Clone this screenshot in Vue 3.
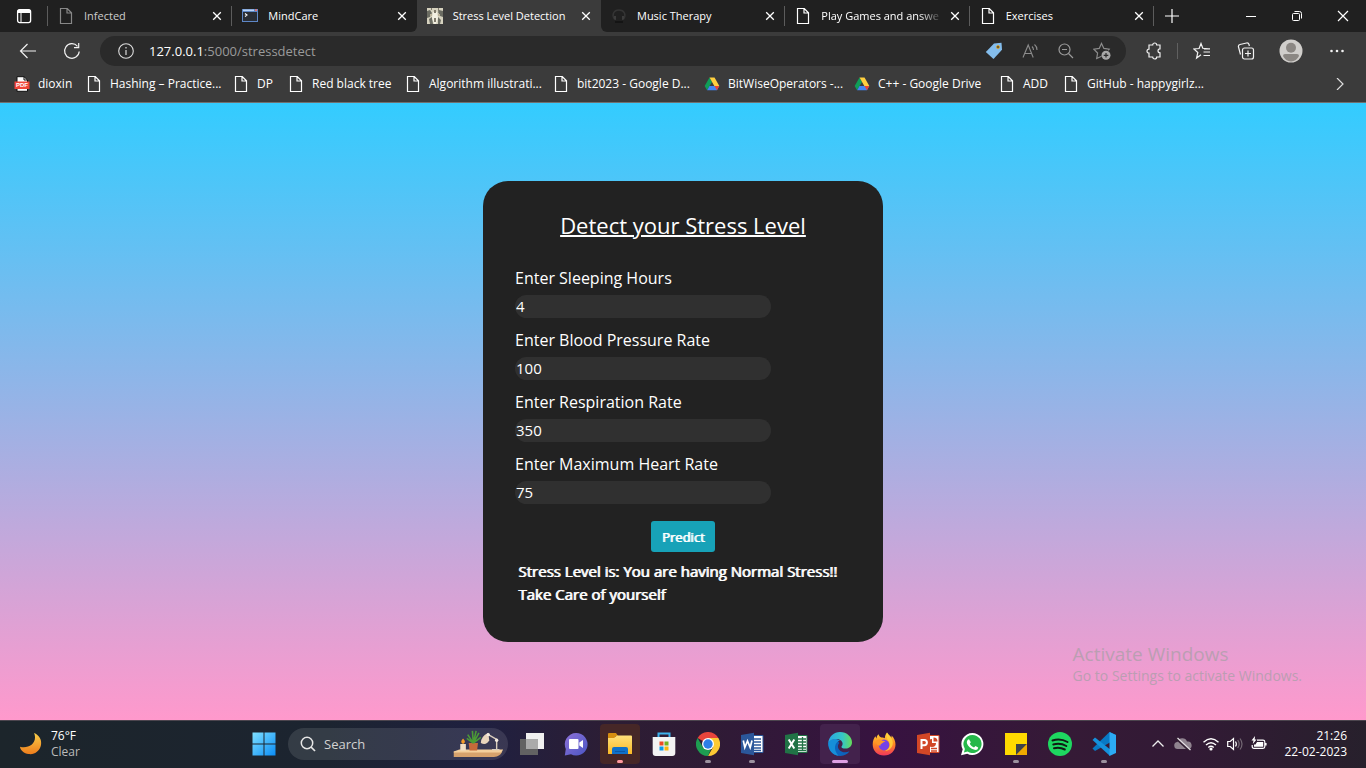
<script setup>
import { ref } from 'vue'

const tabs = [
  { title: 'Infected', icon: 'page', dim: true },
  { title: 'MindCare', icon: 'terminal' },
  { title: 'Stress Level Detection', icon: 'photo', active: true },
  { title: 'Music Therapy', icon: 'headphones' },
  { title: 'Play Games and answe', icon: 'page', fade: true },
  { title: 'Exercises', icon: 'page' }
]

const bookmarks = [
  { title: 'dioxin', icon: 'pdf' },
  { title: 'Hashing – Practice...', icon: 'page' },
  { title: 'DP', icon: 'page' },
  { title: 'Red black tree', icon: 'page' },
  { title: 'Algorithm illustrati...', icon: 'page' },
  { title: 'bit2023 - Google D...', icon: 'page' },
  { title: 'BitWiseOperators -...', icon: 'drive' },
  { title: 'C++ - Google Drive', icon: 'drive' },
  { title: 'ADD', icon: 'page' },
  { title: 'GitHub - happygirlz...', icon: 'page' }
]

const fields = ref([
  { id: 'sleep', label: 'Enter Sleeping Hours', value: '4' },
  { id: 'pressure', label: 'Enter Blood Pressure Rate', value: '100' },
  { id: 'respiration', label: 'Enter Respiration Rate', value: '350' },
  { id: 'heart', label: 'Enter Maximum Heart Rate', value: '75' }
])

const apps = [
  { id: 'taskview', name: 'Task view' },
  { id: 'chat', name: 'Chat' },
  { id: 'explorer', name: 'File Explorer', state: 'attention' },
  { id: 'store', name: 'Microsoft Store' },
  { id: 'chrome', name: 'Chrome', state: 'running' },
  { id: 'word', name: 'Word', state: 'running' },
  { id: 'excel', name: 'Excel' },
  { id: 'edge', name: 'Edge', state: 'current' },
  { id: 'firefox', name: 'Firefox' },
  { id: 'powerpoint', name: 'PowerPoint' },
  { id: 'whatsapp', name: 'WhatsApp' },
  { id: 'notes', name: 'Sticky Notes', state: 'running' },
  { id: 'spotify', name: 'Spotify' },
  { id: 'vscode', name: 'Visual Studio Code', state: 'running' }
]
</script>

<template>
  <div class="desktop">
    <svg class="sprite" width="0" height="0" aria-hidden="true">
      <defs>
        <linearGradient id="g-moon" x1="0" y1="0" x2="0" y2="1"><stop offset="0" stop-color="#f9cf4a" /><stop offset="1" stop-color="#ee7d1c" /></linearGradient>
        <linearGradient id="g-win" x1="0" y1="0" x2="1" y2="1"><stop offset="0" stop-color="#7fe0ff" /><stop offset="1" stop-color="#0a8cf5" /></linearGradient>
        <linearGradient id="g-chat" x1="0" y1="0" x2="1" y2="1"><stop offset="0" stop-color="#8e72d8" /><stop offset="1" stop-color="#4a55c4" /></linearGradient>
        <linearGradient id="g-folder" x1="0" y1="0" x2="0" y2="1"><stop offset="0" stop-color="#ffe07a" /><stop offset="1" stop-color="#fbb925" /></linearGradient>
        <linearGradient id="g-edge" x1="0" y1="0" x2="1" y2="0"><stop offset="0" stop-color="#2aa6e4" /><stop offset="0.6" stop-color="#36c6c6" /><stop offset="1" stop-color="#65dc58" /></linearGradient>
        <linearGradient id="g-fox" x1="0" y1="0" x2="0" y2="1"><stop offset="0" stop-color="#ffd83a" /><stop offset="0.5" stop-color="#ff8a22" /><stop offset="1" stop-color="#f0365c" /></linearGradient>
      </defs>
      <symbol id="i-page" viewBox="0 0 16 16">
        <path d="M2.500.5h6.700L13.500 4.800v10.700h-11zM9 .5V5h4.500" fill="none" stroke="currentColor" stroke-width="1.200" />
      </symbol>
      <symbol id="i-terminal" viewBox="0 0 16 16">
        <path fill="#5e87c6" d="M0 1h16v13H0z" /><path fill="#b9d3f5" d="M1 1.500h11v1.500H1z" /><path fill="#e07272" d="M13 1.300h2v1.700h-2z" /><path fill="#292d34" d="M1 4h14v9H1z" /><path d="M3 5.500l2 1.500-2 1.500" fill="none" stroke="#fff" stroke-width="1.100" />
      </symbol>
      <symbol id="i-photo" viewBox="0 0 16 16">
        <path fill="#d6d2bf" d="M0 0h16v16H0z" /><path fill="#6b6c62" d="M0 3l3-1 2 3-2 4-3 1zM12 2l4 1v6l-3-1-2-4zM2 11l3-2 1 7H3zM11 9l3 3-1 4h-2z" /><path fill="#f3f0e2" d="M6 4h4l1 6-2 6H7L5 10z" /><path fill="#807a6c" d="M7 2h2v3H7zM7 10h2v4H7zM4 0h1v2H4zM11 0h1v3h-1z" /><path fill="#bcb39b" d="M3 6h2v2H3zM11 6h2v2h-2z" />
      </symbol>
      <symbol id="i-headphones" viewBox="0 0 16 16">
        <path d="M3.500 11C.5 7 2.500 2 8 2s7.500 5 4.500 9" fill="none" stroke="#343434" stroke-width="1.500" /><path d="M3 8v3.500l2 .5V8zM13 8v3.500l-2 .5V8z" fill="#3c3c3c" /><path d="M4 14h8" stroke="#141414" stroke-width="2" />
      </symbol>
      <symbol id="i-drive" viewBox="0 0 16 16">
        <path fill="#0f9d58" d="M5.500 1.500L.7 10l2.400 4.300L8 5.900z" /><path fill="#ffcf3f" d="M5.500 1.500h5L15.300 10h-5z" /><path fill="#4285f4" d="M3.100 14.300L5.500 10h9.800l-2.400 4.300z" /><path fill="#ea4335" d="M10.500 10h4.800l-2.400 4.300z" />
      </symbol>
      <symbol id="i-close" viewBox="0 0 16 16"><path d="M4.200 4.200l7.600 7.600M11.800 4.200l-7.600 7.600" stroke="currentColor" stroke-width="1.300" /></symbol>

      <symbol id="a-taskview" viewBox="0 0 24 24">
        <path fill="#f0f0f0" d="M6 1h18v16H6z" /><path fill="#626262" d="M0 7h18v16H0z" /><path fill="#aaa" d="M6 7h12v10H6z" />
      </symbol>
      <symbol id="a-chat" viewBox="0 0 24 24">
        <path fill="url(#g-chat)" d="M12 1a11.300 11.300 0 1 1-5 21.300L.8 23.500 1.800 17A11.300 11.300 0 0 1 12 1z" /><rect x="5" y="7" width="9.500" height="10" rx="1" fill="#fff" /><path fill="#fff" d="M15.300 10.500L19 8v8l-3.700-2.500z" />
      </symbol>
      <symbol id="a-explorer" viewBox="0 0 24 24">
        <path fill="#d68e10" d="M0 2q0-1 1-1h7l2 3h-2L6 7H0z" /><path fill="url(#g-folder)" d="M0 6h6l3-2.500h14q1 0 1 1V22H0z" /><path fill="#0f71c9" d="M4 22v-5q0-2 2-2h12q2 0 2 2v5z" /><path fill="#0b58a5" d="M7 19h10v1H7z" />
      </symbol>
      <symbol id="a-store" viewBox="0 0 24 24">
        <path d="M6.500 6V1.500h11V6" fill="none" stroke="#3db2ed" stroke-width="2" /><path fill="#f3f3f3" d="M.7 5h22.600v16q0 3-3 3H3.700q-3 0-3-3z" /><path fill="#ed4b25" d="M7.500 9.500h4v4h-4z" /><path fill="#75b320" d="M12.500 9.500h4v4h-4z" /><path fill="#0b9be8" d="M7.500 14.500h4v4h-4z" /><path fill="#fbb60c" d="M12.500 14.500h4v4h-4z" />
      </symbol>
      <symbol id="a-chrome" viewBox="0 0 24 24">
        <path fill="#e8453c" d="M12 12L1.600 6A12 12 0 0 1 22.400 6z" /><path fill="#fcc934" d="M12 12V6h10.400A12 12 0 0 1 12 24l5.200-9z" /><path fill="#1e9c51" d="M1.600 6l5.200 9 5.200 3 3-1L12 24A12 12 0 0 1 1.600 6z" /><circle cx="12" cy="12" r="6" fill="#fff" /><circle cx="12" cy="12" r="4.700" fill="#2d7ee8" />
      </symbol>
      <symbol id="a-word" viewBox="0 0 24 24">
        <path fill="#fff" stroke="#2b579a" d="M11 3.500h12v17H11z" /><path d="M13 7h8M13 10h8M13 13h8M13 16h8M13 18.500h8" stroke="#2b579a" stroke-width="1.300" /><path fill="#2b579a" d="M1 3L14 .8v22.400L1 21z" /><path d="M3.300 8.500l1.500 7L7.500 9l2.700 6.500 1.800-7" fill="none" stroke="#fff" stroke-width="1.700" />
      </symbol>
      <symbol id="a-excel" viewBox="0 0 24 24">
        <path fill="#fff" stroke="#217346" d="M11 3.500h12v17H11z" /><path d="M14 7h8M14 10h8M14 13h8M14 16h8M14 18.500h8M18.500 5v14" stroke="#217346" stroke-width="1.300" /><path fill="#217346" d="M1 3L14 .8v22.400L1 21z" /><path d="M4.700 7.500l5.600 9M10.300 7.500l-5.600 9" fill="none" stroke="#fff" stroke-width="2" />
      </symbol>
      <symbol id="a-powerpoint" viewBox="0 0 24 24">
        <path fill="#fff" stroke="#d24726" d="M11 3.500h12v17H11z" /><path d="M15 16.500h6M15 19h6" stroke="#d24726" stroke-width="1.300" /><path fill="#d24726" d="M16 7a4 4 0 1 0 4 4h-4z" /><path fill="#d24726" d="M17.500 5.500a4 4 0 0 1 4 4h-4z" /><path fill="#d24726" d="M1 3L14 .8v22.400L1 21z" /><path d="M5.500 17V8h2.800a2.600 2.600 0 0 1 0 5.200H5.500" fill="none" stroke="#fff" stroke-width="2" />
      </symbol>
      <symbol id="a-edge" viewBox="0 0 24 24">
        <path fill="#0c64bd" d="M.2 10.500C.5 18 5 24 12.500 24c4 0 7-2 9-4.700-4 2-8.500 1-10.500-1.800-1.500-2-1.500-4.500.3-6.500C9 7 3 6 .2 10.500z" /><path fill="#168fd8" d="M.2 11C1.500 7 8 5.500 12 8.500 7 10 4.500 17 10.500 23.800 4.500 23 0 18 .2 11z" /><path fill="url(#g-edge)" d="M.2 10.800C1 4.500 6 0 12 0c7 0 12 5 12 10.300 0 4-3 6.300-6.500 6.300-3 0-4.500-1.200-4-2.100 2.500-2.600.8-7.200-4.700-7.500C4.500 6.800 1.500 8.300.2 10.800z" />
      </symbol>
      <symbol id="a-firefox" viewBox="0 0 24 24">
        <path fill="url(#g-fox)" d="M15 .5c1 1.800 3.200 3.300 4.500 5.200.2-.8.100-1.500 0-2.200C22 5.500 23.500 9 23.500 12.500c0 6.500-5 11-11.500 11S.7 19 .7 12.500C.7 9 1.800 6 3.500 4.300c.2 1 .5 1.700 1 2.200 0-1.800 1-3.500 2-4.300.4 1.600 1.300 2.800 3 3.200 1.400 0 2.800.1 3.300.8C13 4 13.700 2 15 .5z" /><circle cx="12" cy="13" r="5.400" fill="#7542e5" /><path fill="#ff9828" d="M4 9c2-2 5-2 6.500-.3 1.200-.2 2.200 0 3 .8-1.700.1-2.300 1-3.300 1.800-.9.600-1.900.8-1.600 2.200C4.500 14 4 11 4 9z" /><path fill="#ffd43c" d="M15 .5c1 3 5.500 5 5.800 10 .2 5-3.500 8.300-7.800 8.300 3-1 5-3.500 4.700-6.800-.3-3.500-4.700-5-2.700-11.500z" opacity=".85" />
      </symbol>
      <symbol id="a-whatsapp" viewBox="0 0 24 24">
        <path fill="#fff" d="M12.500 1a11 11 0 1 1-5.300 20.700L1 23.300l1.700-6A11 11 0 0 1 12.500 1z" /><path fill="#25b84a" d="M12.500 3a9 9 0 1 1-4.900 16.500l-3.700 1 1-3.600A9 9 0 0 1 12.500 3z" /><path fill="#fff" d="M9 7.200l1.800 3-1 1.500c1 1.900 2.200 3 4.200 3.700l1.500-1.500 2.700 1.500c-.2 2-1.800 2.800-3.600 2.400C10.500 17 8 14 7 11.500c-.6-1.900.4-4 2-4.300z" />
      </symbol>
      <symbol id="a-notes" viewBox="0 0 24 24">
        <path fill="#ffd900" d="M1 1h22v11L12 23H1z" /><path fill="#3d4148" d="M12 12h11L12 23z" /><path fill="#f0a900" d="M23 12v11H12z" />
      </symbol>
      <symbol id="a-spotify" viewBox="0 0 24 24">
        <circle cx="12" cy="12" r="12" fill="#1ed760" /><path d="M4.500 8.500c5-1.500 10.500-1 15 1.500M5.300 12.500c4.300-1.200 9-.8 13 1.500M6 16.200c4-.9 7.500-.5 10.800 1.300" fill="none" stroke="#101a14" stroke-width="2" stroke-linecap="round" />
      </symbol>
      <symbol id="a-vscode" viewBox="0 0 24 24">
        <path fill="#0879c5" d="M17.500 0L24 3v4L3 19l-2.500-2.500z" /><path fill="#1591dc" d="M.5 8L3 5.500 18 17.300V24z" /><path fill="#2cabf4" d="M17.500 0L24 3v18l-6.500 3z" />
      </symbol>
    </svg>

    <header class="browser">
      <div class="tabstrip">
        <button class="tab-menu" aria-label="Tab actions">
          <svg width="16" height="16" viewBox="0 0 16 16"><rect x="1.600" y="1.600" width="13" height="13" rx="2" fill="none" stroke="#fff" stroke-width="1.300" /><path fill="#fff" d="M1.500 3q0-1.500 1.500-1.500h10q1.500 0 1.500 1.500v2h-13z" /><path d="M5 5v9.500" stroke="#fff" /></svg>
        </button>
        <nav class="tabs" aria-label="Tabs">
          <div v-for="tab in tabs" :key="tab.title" class="tab" :class="{ active: tab.active, dim: tab.dim, fade: tab.fade }">
            <svg width="16" height="16"><use :href="'#i-' + tab.icon" /></svg>
            <a href="#" class="tab-title">{{ tab.title }}</a>
            <button class="tab-close" :aria-label="'Close ' + tab.title"><svg width="16" height="16"><use href="#i-close" /></svg></button>
          </div>
        </nav>
        <button class="new-tab" aria-label="New tab"><svg width="16" height="16" viewBox="0 0 16 16"><path d="M8 1v14M1 8h14" stroke="#fff" stroke-width="1.200" /></svg></button>
        <div class="window-buttons">
          <button aria-label="Minimize"><svg width="12" height="12" viewBox="0 0 12 12"><path d="M1 6.500h10" stroke="#fff" /></svg></button>
          <button aria-label="Restore"><svg width="12" height="12" viewBox="0 0 12 12"><rect x="1.500" y="3.500" width="7" height="7" rx="1" fill="none" stroke="#fff" /><path d="M3.500 1.500H8.500q2 0 2 2v5" fill="none" stroke="#fff" /></svg></button>
          <button aria-label="Close"><svg width="12" height="12" viewBox="0 0 12 12"><path d="M1 1l10 10M11 1L1 11" stroke="#fff" stroke-width="1.200" /></svg></button>
        </div>
      </div>

      <div class="toolbar">
        <button class="tool" aria-label="Back"><svg width="18" height="18" viewBox="0 0 18 18"><path d="M17 9H1.500M8.500 2l-7 7 7 7" fill="none" stroke="#f2f2f2" stroke-width="1.200" /></svg></button>
        <button class="tool" aria-label="Refresh"><svg width="18" height="18" viewBox="0 0 18 18"><path d="M16.200 9.500A7.300 7.300 0 1 1 14.500 4.300M15.700 1v4.700H11" fill="none" stroke="#f2f2f2" stroke-width="1.200" /></svg></button>
        <div class="address">
          <svg width="16" height="16" viewBox="0 0 16 16"><circle cx="8" cy="8" r="7.300" fill="none" stroke="#ddd" stroke-width="1.100" /><path d="M8 7v5M8 4v1.500" stroke="#ddd" stroke-width="1.200" /></svg>
          <a href="#" class="url"><span class="host">127.0.0.1</span>:5000/stressdetect</a>
          <button aria-label="Shopping"><svg width="18" height="18" viewBox="0 0 18 18"><path fill="#84bdec" d="M9 1.500L16.500.8l.5 7L8.500 17 .8 10z" /><circle cx="13" cy="5" r="1.500" fill="#4a4028" stroke="#d3a43a" /></svg></button>
          <button aria-label="Read aloud"><svg width="18" height="18" viewBox="0 0 18 18"><path d="M2 15.500L7.200 3l5 12.500M4 11.500h6.500M11 4.500q1.500 1.500 1.500 3.500M13.500 2.500q2.500 2 2.500 5.500" fill="none" stroke="#8c8c8c" stroke-width="1.100" /></svg></button>
          <button aria-label="Zoom"><svg width="18" height="18" viewBox="0 0 18 18"><circle cx="7.500" cy="7.500" r="5.500" fill="none" stroke="#9a9a9a" stroke-width="1.200" /><path d="M5 7.500h5M11.500 11.500l4.500 4.500" stroke="#9a9a9a" stroke-width="1.200" /></svg></button>
          <button aria-label="Add to favorites"><svg width="18" height="18" viewBox="0 0 18 18"><path d="M8.500 14.200l-4.800 2.300.9-5.500L.9 7.200l5.300-.8L8.500 1.500l2.400 4.900 5.300.8-1 1.200" fill="none" stroke="#8c8c8c" stroke-width="1.200" /><circle cx="13" cy="13.300" r="4.500" fill="#a8a8a8" /><path d="M13 11v4.600M10.700 13.300h4.600" stroke="#2b2b2b" stroke-width="1.200" /></svg></button>
        </div>
        <button class="tool" aria-label="Extensions"><svg width="18" height="18" viewBox="0 0 18 18"><path d="M5.500 3h2.200a2 2 0 0 1 4 0h3.300v3.800a2 2 0 0 0 0 4V15h-3.300a2 2 0 0 1-4 0H4v-3.800a2 2 0 1 1 0-4V3z" fill="none" stroke="#f2f2f2" stroke-width="1.200" /></svg></button>
        <span class="divider"></span>
        <button class="tool" aria-label="Favorites"><svg width="18" height="18" viewBox="0 0 18 18"><path d="M8 12.800L3.600 16l1.200-5.500L.9 7l5.200-.5L8 1.500l1.800 4.800 5.700.5M10.500 10H17M10.500 13.500H17M11 6.800h6" fill="none" stroke="#f2f2f2" stroke-width="1.200" /></svg></button>
        <button class="tool" aria-label="Collections"><svg width="18" height="18" viewBox="0 0 18 18"><rect x="5.500" y="6" width="11" height="11" rx="2" fill="none" stroke="#f2f2f2" stroke-width="1.200" /><path d="M11 8.500v6M8 11.500h6M3.500 12.500L1.500 5q-.5-2 1.500-2.500L9.500 1q2-.4 2.500 1.500l.4 1.500" fill="none" stroke="#f2f2f2" stroke-width="1.200" /></svg></button>
        <button class="tool wide" aria-label="Profile"><svg width="24" height="24" viewBox="0 0 24 24"><circle cx="12" cy="12" r="11.500" fill="#d0cecb" /><circle cx="12" cy="8.800" r="5" fill="#8b8783" /><path fill="#8b8783" d="M4 17q0-2 2-2h12q2 0 2 2-2.500 5-8 5.500Q6.500 22 4 17z" /></svg></button>
        <button class="tool wide" aria-label="Settings and more"><svg width="18" height="18" viewBox="0 0 18 18" fill="#f2f2f2"><circle cx="3.500" cy="9" r="1.300" /><circle cx="9" cy="9" r="1.300" /><circle cx="14.500" cy="9" r="1.300" /></svg></button>
      </div>

      <nav class="bookmarks" aria-label="Favorites bar">
        <a v-for="mark in bookmarks" :key="mark.title" href="#">
          <svg v-if="mark.icon === 'pdf'" width="16" height="16" viewBox="0 0 16 16">
            <path d="M3 .7h7L13.500 4v11.300H3z" fill="#fff" stroke="#111" /><path d="M10 .7V4h3.500" fill="none" stroke="#111" /><path fill="#f04438" d="M.5 5.500h15v7.500H.5z" /><text class="pdf-label" x="8" y="11">PDF</text>
          </svg>
          <svg v-else width="16" height="16"><use :href="'#i-' + mark.icon" /></svg>{{ mark.title }}
        </a>
        <button aria-label="More favorites"><svg width="12" height="12" viewBox="0 0 12 12"><path d="M3 0l6 6-6 6" fill="none" stroke="#ddd" stroke-width="1.200" /></svg></button>
      </nav>
    </header>

    <main class="page">
      <form class="card" @submit.prevent>
        <h1>Detect your Stress Level</h1>
        <div v-for="field in fields" :key="field.id" class="field">
          <label :for="field.id">{{ field.label }}</label>
          <input :id="field.id" v-model="field.value" type="text" inputmode="numeric">
        </div>
        <button class="predict" type="submit">Predict</button>
        <p class="result">Stress Level is: You are having Normal Stress!! Take Care of yourself</p>
      </form>
      <div class="watermark">
        <p class="wm-title">Activate Windows</p>
        <p class="wm-text">Go to Settings to activate Windows.</p>
      </div>
    </main>

    <footer class="taskbar">
      <a href="#" class="weather">
        <svg width="24" height="24" viewBox="0 0 24 24"><path fill="url(#g-moon)" d="M15 1c5 2 8 6.500 7 12-1.200 6-6.500 10-12.500 9C5 21.300 1.500 18.500 1 14.700c7 2 15-1.700 15-9.200 0-1.700-.4-3.300-1-4.500z" /></svg>
        <span><b>76°F</b>Clear</span>
      </a>
      <div class="dock">
        <button class="app" aria-label="Start"><svg width="24" height="24" viewBox="0 0 24 24"><path fill="url(#g-win)" d="M.5.5h11v11H.5zM12.500.5h11v11h-11zM.5 12.500h11v11H.5zM12.500 12.500h11v11h-11z" /></svg></button>
        <label class="search">
          <svg width="16" height="16" viewBox="0 0 16 16"><circle cx="7" cy="7" r="5.700" fill="none" stroke="#e6e6e6" stroke-width="1.500" /><path d="M11 11l4 4" stroke="#e6e6e6" stroke-width="1.700" /></svg>
          <input type="search" placeholder="Search" aria-label="Search">
          <svg width="52" height="28" viewBox="0 0 54 30">
            <path fill="#d6a26c" d="M1 23h52q-2 5-9 6H1z" /><path fill="#f3cf9c" d="M1 23l6-2h47l-2 3H1z" />
            <path fill="#f1dfc4" d="M8 15h6v7H8z" /><path fill="#f49b28" d="M11 9q4 4 0 6-4-2 0-6z" />
            <path fill="#c66a3a" d="M17 14h10l-1 8h-8z" />
            <path d="M22 14L21 1M22 14L16 5M22 14L28 3M22 14l-7-5M22 14l8-6M22 14L25 1" stroke="#4b9b35" stroke-width="1.700" />
            <path d="M38 5l9 5v11M42 21h8" fill="none" stroke="#d9cdbd" stroke-width="1.500" /><path fill="#e9d5bd" d="M38 3l1 8q-3 6-9 3 0-7 8-11z" /><circle cx="38" cy="5" r="1.800" fill="#f4eadf" /><circle cx="47" cy="11" r="1.800" fill="#f4eadf" />
          </svg>
        </label>
        <button v-for="app in apps" :key="app.id" class="app" :class="app.state" :aria-label="app.name">
          <svg width="24" height="24"><use :href="'#a-' + app.id" /></svg>
        </button>
      </div>
      <div class="tray">
        <svg width="16" height="16" viewBox="0 0 16 16"><path d="M2.500 10.500L8 5l5.500 5.500" fill="none" stroke="#eee" stroke-width="1.300" /></svg>
        <svg class="cloud" width="18" height="16" viewBox="0 0 18 16"><path fill="#8f838f" d="M4 13a3.500 3.500 0 0 1-.5-7A5 5 0 0 1 13 5.500 3.800 3.800 0 0 1 14.500 13z" /><path d="M2 2l13 12" stroke="#332033" stroke-width="2.500" /><path d="M3.500 2l13 12" stroke="#e5e0e5" stroke-width="1.300" /></svg>
        <svg width="16" height="16" viewBox="0 0 16 16"><path d="M.5 6.200q7.500-6.800 15 0M3 9q5-4.600 10 0M5.300 11.500q2.700-2.400 5.400 0" fill="none" stroke="#fff" stroke-width="1.400" /><circle cx="8" cy="13" r="1.600" fill="#fff" /></svg>
        <svg width="16" height="16" viewBox="0 0 16 16"><path d="M.7 5.500h2.500l3.300-3v11l-3.300-3H.7z" fill="none" stroke="#fff" stroke-width="1.200" /><path d="M8.500 5.500q1.700 2.500 0 5" fill="none" stroke="#fff" stroke-width="1.200" /><path d="M10.700 4q3 4 0 8M13 2.500q4 5.500 0 11" fill="none" stroke="#746874" stroke-width="1.200" /></svg>
        <svg width="16" height="16" viewBox="0 0 16 16"><path d="M6 4.200h6q1.800 0 1.800 1.800v4.500q0 1.800-1.800 1.800H3q-1.800 0-1.800-1.800V9M15 7v2.500" fill="none" stroke="#fff" stroke-width="1.200" /><path fill="#fff" d="M6 6h6.200v4.700H3V8.500h1.500zM4 0L.5 4.500h2L1.800 8 5.500 3.500H3.700z" /></svg>
        <time class="clock" datetime="2023-02-22T21:26"><span>21:26</span><span>22-02-2023</span></time>
      </div>
    </footer>
  </div>
</template>

<style>
body {
  margin: 0;
}
</style>

<style scoped>
.desktop {
  display: flex;
  flex-direction: column;
  min-height: 100vh;
  font-family: "Open Sans", "Noto Sans", sans-serif;
  font-size: 12px;
  color: #fff;
}
.desktop * {
  box-sizing: border-box;
}
.sprite {
  position: absolute;
}
button {
  display: flex;
  align-items: center;
  justify-content: center;
  padding: 0;
  border: 0;
  background: none;
  color: inherit;
  font: inherit;
}
a {
  color: inherit;
  text-decoration: none;
}
svg {
  flex: none;
}
h1,
p {
  margin: 0;
}

.browser {
  background: #3b3b3b;
  border-bottom: 1px solid #707070;
}
.tabstrip {
  display: flex;
  height: 32px;
  background: #202020;
}
.tab-menu {
  width: 48px;
}
.tabs {
  display: flex;
  flex: 0 1 1106px;
  min-width: 0;
  background: #3b3b3b;
}
.tab {
  position: relative;
  display: flex;
  flex: 1 1 0;
  min-width: 0;
  align-items: center;
  gap: 10px;
  padding: 0 7px 0 10px;
  background: #202020;
}
.tab:not(.active)::after {
  content: "";
  position: absolute;
  right: 0;
  top: 6px;
  width: 1px;
  height: 20px;
  background: #5c5c5c;
}
.tab:nth-child(1)::before {
  content: "";
  position: absolute;
  left: -1px;
  top: 6px;
  width: 1px;
  height: 20px;
  background: #5c5c5c;
}
.tab:nth-child(2) {
  border-bottom-right-radius: 6px;
}
.tab:nth-child(2)::after {
  display: none;
}
.tab:nth-child(4) {
  border-bottom-left-radius: 6px;
}
.tab.active {
  background: #3b3b3b;
}
.dim > svg {
  color: #888;
}
.dim .tab-title {
  color: #ccc;
}
.tab-title {
  flex: 1;
  padding-bottom: 2px;
  font-size: 11px;
  white-space: nowrap;
}
.fade .tab-title {
  mask-image: linear-gradient(to right, #000 calc(100% - 24px), transparent);
}
.tab-close {
  width: 16px;
  margin-left: -6px;
}
.new-tab {
  width: 36px;
}
.window-buttons {
  display: flex;
  margin-left: auto;
}
.window-buttons button {
  width: 46px;
}

.toolbar {
  display: flex;
  align-items: center;
  height: 38px;
  padding: 0 6px;
}
.tool {
  width: 44px;
  height: 30px;
}
.wide {
  width: 46px;
}
.address {
  display: flex;
  flex: 1;
  align-items: center;
  height: 30px;
  margin: 0 6px;
  padding: 0 6px 0 18px;
  border-radius: 15px;
  background: #2a2a2a;
}
.address button {
  width: 36px;
  height: 30px;
}
.url {
  flex: 1;
  padding-left: 15px;
  font-size: 13px;
  color: #9a9a9a;
}
.host {
  color: #fff;
}
.divider {
  width: 1px;
  height: 16px;
  margin: 0 2px 0 1px;
  background: #606060;
}

.bookmarks {
  display: grid;
  grid-template-columns: 72px 147px 55px 117px 148px 151px 150px 145px 64px 1fr 24px;
  align-items: center;
  height: 32px;
  padding: 0 14px 5px;
}
.bookmarks a {
  display: flex;
  align-items: center;
  gap: 8px;
  white-space: nowrap;
}
.pdf-label {
  fill: #fff;
  font-family: "Liberation Sans", sans-serif;
  font-size: 6px;
  font-weight: 700;
  text-anchor: middle;
}

.page {
  position: relative;
  display: flex;
  flex: 1;
  align-items: center;
  justify-content: center;
  background: linear-gradient(#33ccff, #ff99cc);
}
.card {
  width: 400px;
  padding: 28px 32px 36px;
  border-radius: 25px;
  background: #222;
}
h1 {
  margin-bottom: 25px;
  font-size: 22px;
  font-weight: 400;
  line-height: 32px;
  text-align: center;
  text-decoration: underline 2px;
}
.field {
  display: flex;
  flex-direction: column;
  gap: 5px;
  margin-bottom: 10px;
  font-size: 16px;
  line-height: 24px;
}
.field input {
  width: 256px;
  height: 23px;
  padding: 0 1px 2px;
  border: 0;
  border-radius: 12px;
  outline: 0;
  background: #303030;
  color: #fff;
  font: inherit;
  font-size: 15px;
  line-height: 21px;
}
.predict {
  min-width: 64px;
  height: 31px;
  margin: 17px auto 8px;
  border-radius: 3px;
  background: #17a2b8;
  font-size: 13px;
  text-shadow: 1px 0 currentColor;
}
.result {
  padding-left: 3px;
  font-size: 15px;
  line-height: 23px;
  text-shadow: 1px 0 currentColor;
}
.watermark {
  position: absolute;
  right: 64px;
  bottom: 34px;
  color: #bb9eb2;
}
.wm-title {
  font-size: 19px;
  line-height: 24px;
}
.wm-text {
  font-size: 14px;
  line-height: 20px;
}

.taskbar {
  display: grid;
  grid-template-columns: 1fr auto 1fr;
  align-items: center;
  height: 48px;
  padding-bottom: 2px;
  border-top: 1px solid #4c454e;
  background: linear-gradient(90deg, #1c252b 0%, #1c2430 24%, #1f2040 35%, #2d1d34 45%, #2f1b35 52%, #371240 65%, #351a36 78%, #321a35 87%, #27202c 100%);
}
.weather {
  display: flex;
  align-items: center;
  gap: 8px;
  padding-left: 19px;
  line-height: 16px;
}
.weather span {
  display: flex;
  flex-direction: column;
  color: #bbb;
}
.weather b {
  color: #fff;
  font-weight: 400;
}
.dock {
  display: flex;
  align-items: center;
  padding-left: 2px;
}
.app {
  position: relative;
  width: 40px;
  height: 40px;
  margin: 0 2px;
  border-radius: 4px;
}
.attention {
  background: #462727;
}
.current {
  background: #43224c;
}
.running::after,
.attention::after,
.current::after {
  content: "";
  position: absolute;
  bottom: 1px;
  left: 17px;
  width: 6px;
  height: 3px;
  border-radius: 2px;
  background: #9d929f;
}
.attention::after {
  background: #ff99a0;
}
.current::after {
  left: 12px;
  width: 16px;
  background: #dfa0e4;
}
.search {
  display: flex;
  align-items: center;
  width: 220px;
  height: 32px;
  margin: 0 2px;
  padding: 0 4px 0 12px;
  border-radius: 16px;
  background: #ffffff1c;
}
.search input {
  flex: 1;
  min-width: 0;
  padding: 0 0 0 8px;
  border: 0;
  outline: 0;
  background: none;
  color: #fff;
  font: inherit;
  font-size: 13px;
}
.search input::placeholder {
  color: #d2d2d2;
  opacity: 1;
}
.tray {
  display: flex;
  align-items: center;
  justify-content: flex-end;
  gap: 8px;
  padding-right: 19px;
}
.tray .cloud {
  margin-right: 3px;
}
.clock {
  display: flex;
  flex-direction: column;
  margin-left: 9px;
  line-height: 16px;
  text-align: right;
}
</style>
